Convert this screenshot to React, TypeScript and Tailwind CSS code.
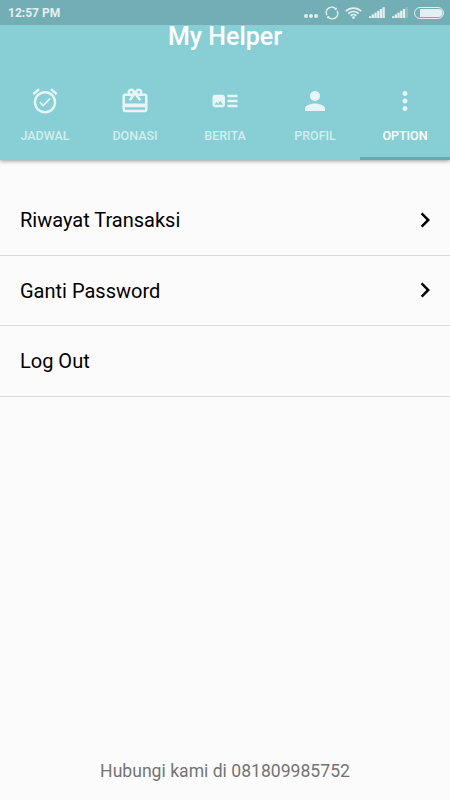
import {
  MdAlarmOn,
  MdArtTrack,
  MdCardGiftcard,
  MdChevronRight,
  MdMoreVert,
  MdPerson,
} from "react-icons/md";
import type { IconType } from "react-icons";

interface Tab {
  id: number;
  name: string;
  icon: IconType;
}

interface OptionItem {
  id: number;
  name: string;
  hasArrow: boolean;
}

const tabs: Tab[] = [
  { id: 1, name: "JADWAL", icon: MdAlarmOn },
  { id: 2, name: "DONASI", icon: MdCardGiftcard },
  { id: 3, name: "BERITA", icon: MdArtTrack },
  { id: 4, name: "PROFIL", icon: MdPerson },
  { id: 5, name: "OPTION", icon: MdMoreVert },
];

const optionItems: OptionItem[] = [
  { id: 1, name: "Riwayat Transaksi", hasArrow: true },
  { id: 2, name: "Ganti Password", hasArrow: true },
  { id: 3, name: "Log Out", hasArrow: false },
];

const signalBars = [0, 1, 2, 3, 4, 5];

function SignalIcon({ strength }: { strength: number }) {
  return (
    <svg width="16" height="11" viewBox="0 0 16 11" fill="#e3eff0">
      {signalBars.map((bar) => (
        <rect
          key={bar}
          x={bar * 2.7}
          y={9.2 - bar * 1.8}
          width={2.3}
          height={1.8 + bar * 1.8}
          opacity={bar < strength ? 1 : 0.25}
        />
      ))}
    </svg>
  );
}

function StatusBar() {
  return (
    <div className="flex h-[25px] items-center bg-[#73aeb5] pl-[8px] pr-[6px] text-[#e3eff0]">
      <span className="pt-[2px] text-[12px] font-bold leading-[23px]">12:57 PM</span>
      <div className="ml-auto flex items-center">
        <svg width="14" height="4" viewBox="0 0 14 4" fill="currentColor" className="mr-[7px] mt-[7px]">
          <circle cx="2" cy="2" r="1.9" />
          <circle cx="7" cy="2" r="1.9" />
          <circle cx="12" cy="2" r="1.9" />
        </svg>
        <svg width="14" height="14" viewBox="0 0 14 14" fill="none" stroke="currentColor" strokeWidth="1.5" className="mr-[6px]">
          <path d="M1.8 9.2A5.6 5.6 0 0 1 11 3M12.2 4.8A5.6 5.6 0 0 1 3 11" />
          <path d="M11.4 1.8v1.6H9.8M2.6 12.2v-1.6h1.6" strokeWidth="1" />
        </svg>
        <svg width="17" height="12" viewBox="0 0 17 12" fill="none" stroke="currentColor" strokeWidth="1.7" className="mr-[7px]">
          <path d="M.8 4.2a11 11 0 0 1 15.4 0M3.3 6.6a7.5 7.5 0 0 1 10.4 0M5.7 8.8a4 4 0 0 1 5.6 0" />
          <circle cx="8.5" cy="10.6" r="1.4" fill="currentColor" stroke="none" />
        </svg>
        <div className="mr-[7px]">
          <SignalIcon strength={6} />
        </div>
        <div className="mr-[6px]">
          <SignalIcon strength={5} />
        </div>
        <svg width="30" height="12" viewBox="0 0 30 12">
          <rect x=".5" y=".5" width="29" height="11" rx="5.5" fill="none" stroke="#e3eff0" />
          <path d="M6 2h18.5a4 4 0 0 1 0 8H6z" fill="#e3eff0" />
        </svg>
      </div>
    </div>
  );
}

function TabBar() {
  return (
    <nav className="grid h-[81px] grid-cols-5">
      {tabs.map((tab) => {
        const isActive = tab.name === "OPTION";
        const Icon = tab.icon;

        return (
          <button
            key={tab.id}
            className={`flex flex-col items-center border-b-[3px] pt-[7px] ${
              isActive ? "border-[#68aab2] text-white" : "border-transparent text-[#d3edef]"
            }`}
          >
            <Icon size={30} className="text-[#e7f5f7]" />
            <span className="mt-[11px] text-[12.5px] font-medium leading-[18px]">{tab.name}</span>
          </button>
        );
      })}
    </nav>
  );
}

export default function App() {
  return (
    <div className="flex h-[800px] w-[450px] flex-col overflow-hidden bg-[#fbfbfb] font-[Roboto,sans-serif]">
      <header className="bg-[#88cfd5] shadow-[0_1px_4px_rgba(0,0,0,0.4)]">
        <StatusBar />
        <h1 className="h-[54px] text-center text-[25px] font-medium leading-[24px] text-white">My Helper</h1>
        <TabBar />
      </header>

      <ul className="mt-[25.6px]">
        {optionItems.map((item) => (
          <li
            key={item.id}
            className="flex h-[70.4px] items-center justify-between border-b border-[#dadada] pl-[20px] pr-[10px] text-[20px] text-black"
          >
            <span>{item.name}</span>
            {item.hasArrow && <MdChevronRight size={30} className="mb-px" />}
          </li>
        ))}
      </ul>

      <footer className="mb-[17px] mt-auto text-center text-[17.6px] leading-[24px] text-[#747474]">
        Hubungi kami di 081809985752
      </footer>
    </div>
  );
}
